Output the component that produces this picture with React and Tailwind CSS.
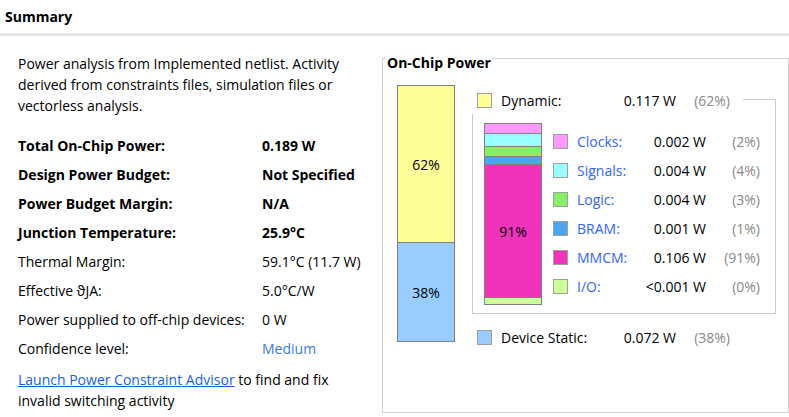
import React from 'react';

const font = { fontFamily: '"Open Sans", "Noto Sans", sans-serif' };

const summaryRows = [
  { label: 'Total On-Chip Power:', value: '0.189 W', bold: true },
  { label: 'Design Power Budget:', value: 'Not Specified', bold: true },
  { label: 'Power Budget Margin:', value: 'N/A', bold: true },
  { label: 'Junction Temperature:', value: '25.9°C', bold: true },
  { label: 'Thermal Margin:', value: '59.1°C (11.7 W)' },
  { label: 'Effective ϑJA:', value: '5.0°C/W' },
  { label: 'Power supplied to off-chip devices:', value: '0 W' },
  { label: 'Confidence level:', value: 'Medium', link: true },
];

const dynamicRows = [
  { name: 'Clocks:', value: '0.002 W', pct: '(2%)', color: 'bg-[#ff99ff]' },
  { name: 'Signals:', value: '0.004 W', pct: '(4%)', color: 'bg-[#99ffff]' },
  { name: 'Logic:', value: '0.004 W', pct: '(3%)', color: 'bg-[#88ee66]' },
  { name: 'BRAM:', value: '0.001 W', pct: '(1%)', color: 'bg-[#4da6f0]' },
  { name: 'MMCM:', value: '0.106 W', pct: '(91%)', color: 'bg-[#f033bb]' },
  { name: 'I/O:', value: '<0.001 W', pct: '(0%)', color: 'bg-[#ccff99]' },
];

function Swatch({ color }) {
  return <div className={`w-[15px] h-[15px] shrink-0 border border-[#a0a0a0] ${color}`} />;
}

function App() {
  return (
    <div className="w-[789px] h-[417px] bg-white text-[14px] text-black overflow-hidden" style={font}>
      {/* Header */}
      <div className="h-[33px] flex items-center px-[5px] font-bold">Summary</div>
      <div className="h-[3px] bg-[#e6e6e6]" />

      <div className="flex">
        {/* Left column */}
        <div className="w-[382px] pl-[18px] pt-[17px]">
          <p className="leading-[21px] pr-[30px]">
            Power analysis from Implemented netlist. Activity derived from constraints files, simulation files or
            vectorless analysis.
          </p>

          <div className="mt-[15px]">
            {summaryRows.map((row) => (
              <div key={row.label} className={`flex items-center h-[29px] ${row.bold ? 'font-bold' : ''}`}>
                <div className="w-[244px] shrink-0">{row.label}</div>
                <div className={row.link ? 'text-[#3d7be0]' : ''}>{row.value}</div>
              </div>
            ))}
          </div>

          <p className="mt-[6px] leading-[21px]">
            <span className="text-[#1a5fe0] underline">Launch Power Constraint Advisor</span> to find and fix
            <br />
            invalid switching activity
          </p>
        </div>

        {/* On-Chip Power group */}
        <div className="relative mt-[22px] w-[407px] h-[355px] border border-[#d4d4d4]">
          <div className="absolute -top-[6px] left-[3px] bg-white px-[1px] font-bold leading-[20px]">On-Chip Power</div>

          <div className="flex items-start">
            {/* Total bar */}
            <div className="ml-[14px] mt-[26px] w-[58px] h-[257px] border border-[#808080] flex flex-col">
              <div className="h-[157px] bg-[#ffff99] border-b border-[#808080] flex items-center justify-center">62%</div>
              <div className="flex-1 bg-[#99ccff] flex items-center justify-center">38%</div>
            </div>

            {/* Breakdown */}
            <div className="ml-[17px] mt-[40px] w-[304px]">
              <div className="relative h-[215px] border border-[#cccccc]">
                <div className="absolute -top-[11px] -left-[2px] w-[272px] h-[25px] bg-white">
                  <div className="flex items-center h-[22px] pl-[6px]">
                    <Swatch color="bg-[#ffff99]" />
                    <div className="ml-[9px] w-[113px]">Dynamic:</div>
                    <div className="w-[62px] text-right">0.117 W</div>
                    <div className="w-[54px] text-right text-[#888888]">(62%)</div>
                  </div>
                </div>

                <div className="flex items-start ml-[11px] mt-[23px]">
                  <div className="w-[58px] h-[182px] border border-[#808080] flex flex-col">
                    <div className="h-[10px] bg-[#ff99ff] border-b border-[#808080]" />
                    <div className="h-[13px] bg-[#99ffff] border-b border-[#808080]" />
                    <div className="h-[10px] bg-[#88ee66] border-b border-[#808080]" />
                    <div className="h-[8px] bg-[#4da6f0] border-b border-[#808080]" />
                    <div className="h-[133px] bg-[#f033bb] border-b border-[#808080] flex items-center justify-center">91%</div>
                    <div className="flex-1 bg-[#ccff99]" />
                  </div>

                  <div className="ml-[11px] mt-[4px]">
                    {dynamicRows.map((row) => (
                      <div key={row.name} className="flex items-center h-[29px]">
                        <Swatch color={row.color} />
                        <div className="ml-[9px] w-[66px] text-[#3366ee]">{row.name}</div>
                        <div className="w-[63px] text-right">{row.value}</div>
                        <div className="w-[54px] text-right text-[#888888]">{row.pct}</div>
                      </div>
                    ))}
                  </div>
                </div>
              </div>

              <div className="flex items-center h-[22px] mt-[12px] pl-[5px]">
                <Swatch color="bg-[#99ccff]" />
                <div className="ml-[9px] w-[113px]">Device Static:</div>
                <div className="w-[62px] text-right">0.072 W</div>
                <div className="w-[54px] text-right text-[#888888]">(38%)</div>
              </div>
            </div>
          </div>
        </div>
      </div>
    </div>
  );
}

export default App;
